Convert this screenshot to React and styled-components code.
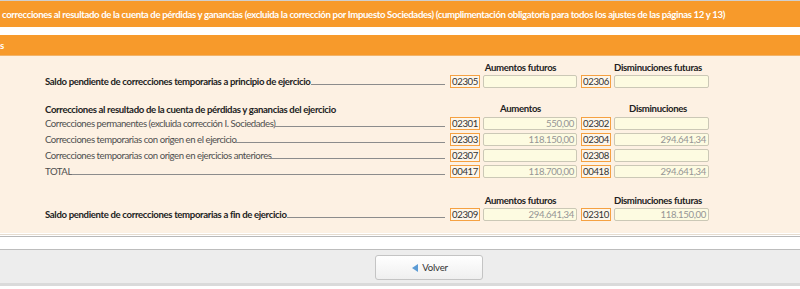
import React from "react";
import styled, { createGlobalStyle } from "styled-components";

const Global = createGlobalStyle`
  html, body { margin: 0; padding: 0; background: #ffffff; }
  body { font-family: Lato, "Open Sans", sans-serif; overflow: hidden; letter-spacing: -0.35px; }
  * { box-sizing: border-box; }
`;

const Page = styled.div`
  width: 800px;
  height: 289px;
  display: flex;
  flex-direction: column;
  border-top: 1px solid #cfcfcf;
  overflow: hidden;
`;

const Bar = styled.div`
  background: #f79a2b;
  color: #ffffff;
  font-weight: 700;
  font-size: 9.6px;
  height: ${(p) => p.$h}px;
  display: flex;
  align-items: center;
  padding-left: ${(p) => p.$pad}px;
  white-space: nowrap;
  overflow: hidden;
`;

const Spacer = styled.div`
  height: ${(p) => p.$h}px;
  background: #ffffff;
`;

const Panel = styled.div`
  background: #fdf1e3;
  border-top: 1px solid #f2b46a;
  padding: 5px 91px 0 45px;
  height: 178px;
  display: flex;
  flex-direction: column;
`;

const Group = styled.div`
  display: flex;
  flex-direction: column;
  gap: ${(p) => p.$gap || 0}px;
  margin-bottom: ${(p) => p.$mb || 0}px;
`;

const Row = styled.div`
  display: grid;
  grid-template-columns: 1fr 127px 128px;
  column-gap: 4px;
  height: ${(p) => p.$h || 13}px;
  align-items: stretch;
`;

const HeadCell = styled.div`
  font-size: 9.6px;
  font-weight: 700;
  color: #222;
  text-align: center;
  padding-left: ${(p) => p.$pl}px;
  line-height: ${(p) => p.$h}px;
  white-space: nowrap;
`;

const LabelCell = styled.div`
  display: flex;
  align-items: stretch;
  padding-right: 1px;
  min-width: 0;
`;

const LabelText = styled.span`
  font-size: 9.6px;
  font-weight: ${(p) => (p.$bold ? 700 : 400)};
  color: ${(p) => (p.$bold ? "#222" : "#4f4f4f")};
  letter-spacing: ${(p) => (p.$bold ? "-0.35px" : "-0.45px")};
  line-height: 13px;
  white-space: nowrap;
`;

const Leader = styled.span`
  flex: 1;
  border-bottom: 1px solid #8c8c8c;
  margin-bottom: 3px;
`;

const Field = styled.div`
  display: grid;
  grid-template-columns: 30px 1fr;
  column-gap: 3px;
`;

const Code = styled.div`
  border: 1px solid #f5a142;
  background: #fdf6ea;
  color: #333;
  font-size: 9.6px;
  line-height: 11px;
  display: flex;
  align-items: center;
  justify-content: center;
`;

const Input = styled.div`
  background: #fdfbe1;
  border: 1px solid #cbc8b6;
  border-radius: 2px;
  color: #959595;
  font-size: 9.6px;
  line-height: 11px;
  display: flex;
  align-items: center;
  justify-content: flex-end;
  padding-right: 2px;
`;

const Bottom = styled.div`
  border-top: 1px solid #e6dccf;
  margin-top: 1px;
  height: 3px;
  border-bottom: 1px solid #b9b9b9;
`;

const Footer = styled.div`
  margin-top: 12px;
  border-top: 1px solid #bdbdbd;
  background: #ededed;
  height: 37px;
  border-bottom: 3px solid #dadada;
  display: flex;
  justify-content: center;
  padding: 5px 0 0 58px;
`;

const Button = styled.button`
  width: 108px;
  height: 25px;
  border: 1px solid #c4c4c4;
  border-radius: 3px;
  background: linear-gradient(#ffffff, #efefef);
  font-family: Lato, "Open Sans", sans-serif;
  font-size: 9.6px;
  letter-spacing: -0.2px;
  color: #333;
  display: flex;
  align-items: center;
  justify-content: center;
  gap: 4px;
  padding: 0 0 0 2px;
`;

const FieldRow = ({ label, bold, a, b }) => (
  <Row>
    <LabelCell>
      <LabelText $bold={bold}>{label}</LabelText>
      <Leader />
    </LabelCell>
    <Field>
      <Code>{a[0]}</Code>
      <Input>{a[1]}</Input>
    </Field>
    <Field>
      <Code>{b[0]}</Code>
      <Input>{b[1]}</Input>
    </Field>
  </Row>
);

const Heads = ({ left, a, b, h }) => (
  <Row $h={h}>
    <LabelCell>
      {left && <LabelText $bold>{left}</LabelText>}
    </LabelCell>
    <HeadCell $pl={14} $h={h}>{a}</HeadCell>
    <HeadCell $pl={26} $h={h}>{b}</HeadCell>
  </Row>
);

export default function App() {
  return (
    <>
      <Global />
      <Page>
        <Bar $h={26} $pad={2}>
          correcciones al resultado de la cuenta de pérdidas y ganancias (excluida la corrección por Impuesto Sociedades) (cumplimentación obligatoria para todos los ajustes de las páginas 12 y 13)
        </Bar>
        <Spacer $h={8} />
        <Bar $h={20} $pad={0}>s</Bar>
        <Panel>
          <Group $mb={15}>
            <Heads a="Aumentos futuros" b="Disminuciones futuras" h={14} />
            <FieldRow bold label="Saldo pendiente de correcciones temporarias a principio de ejercicio" a={["02305", ""]} b={["02306", ""]} />
          </Group>
          <Group $gap={3} $mb={16}>
            <Heads left="Correcciones al resultado de la cuenta de pérdidas y ganancias del ejercicio" a="Aumentos" b="Disminuciones" h={11} />
            <FieldRow label="Correcciones permanentes (excluida corrección I. Sociedades)" a={["02301", "550,00"]} b={["02302", ""]} />
            <FieldRow label="Correcciones temporarias con origen en el ejercicio" a={["02303", "118.150,00"]} b={["02304", "294.641,34"]} />
            <FieldRow label="Correcciones temporarias con origen en ejercicios anteriores" a={["02307", ""]} b={["02308", ""]} />
            <FieldRow label="TOTAL" a={["00417", "118.700,00"]} b={["00418", "294.641,34"]} />
          </Group>
          <Group>
            <Heads a="Aumentos futuros" b="Disminuciones futuras" h={14} />
            <FieldRow bold label="Saldo pendiente de correcciones temporarias a fin de ejercicio" a={["02309", "294.641,34"]} b={["02310", "118.150,00"]} />
          </Group>
        </Panel>
        <Bottom />
        <Footer>
          <Button>
            <svg width="6" height="8" viewBox="0 0 6 8"><path d="M6 0 L0 4 L6 8 Z" fill="#5b9bd5" /></svg>
            Volver
          </Button>
        </Footer>
      </Page>
    </>
  );
}
